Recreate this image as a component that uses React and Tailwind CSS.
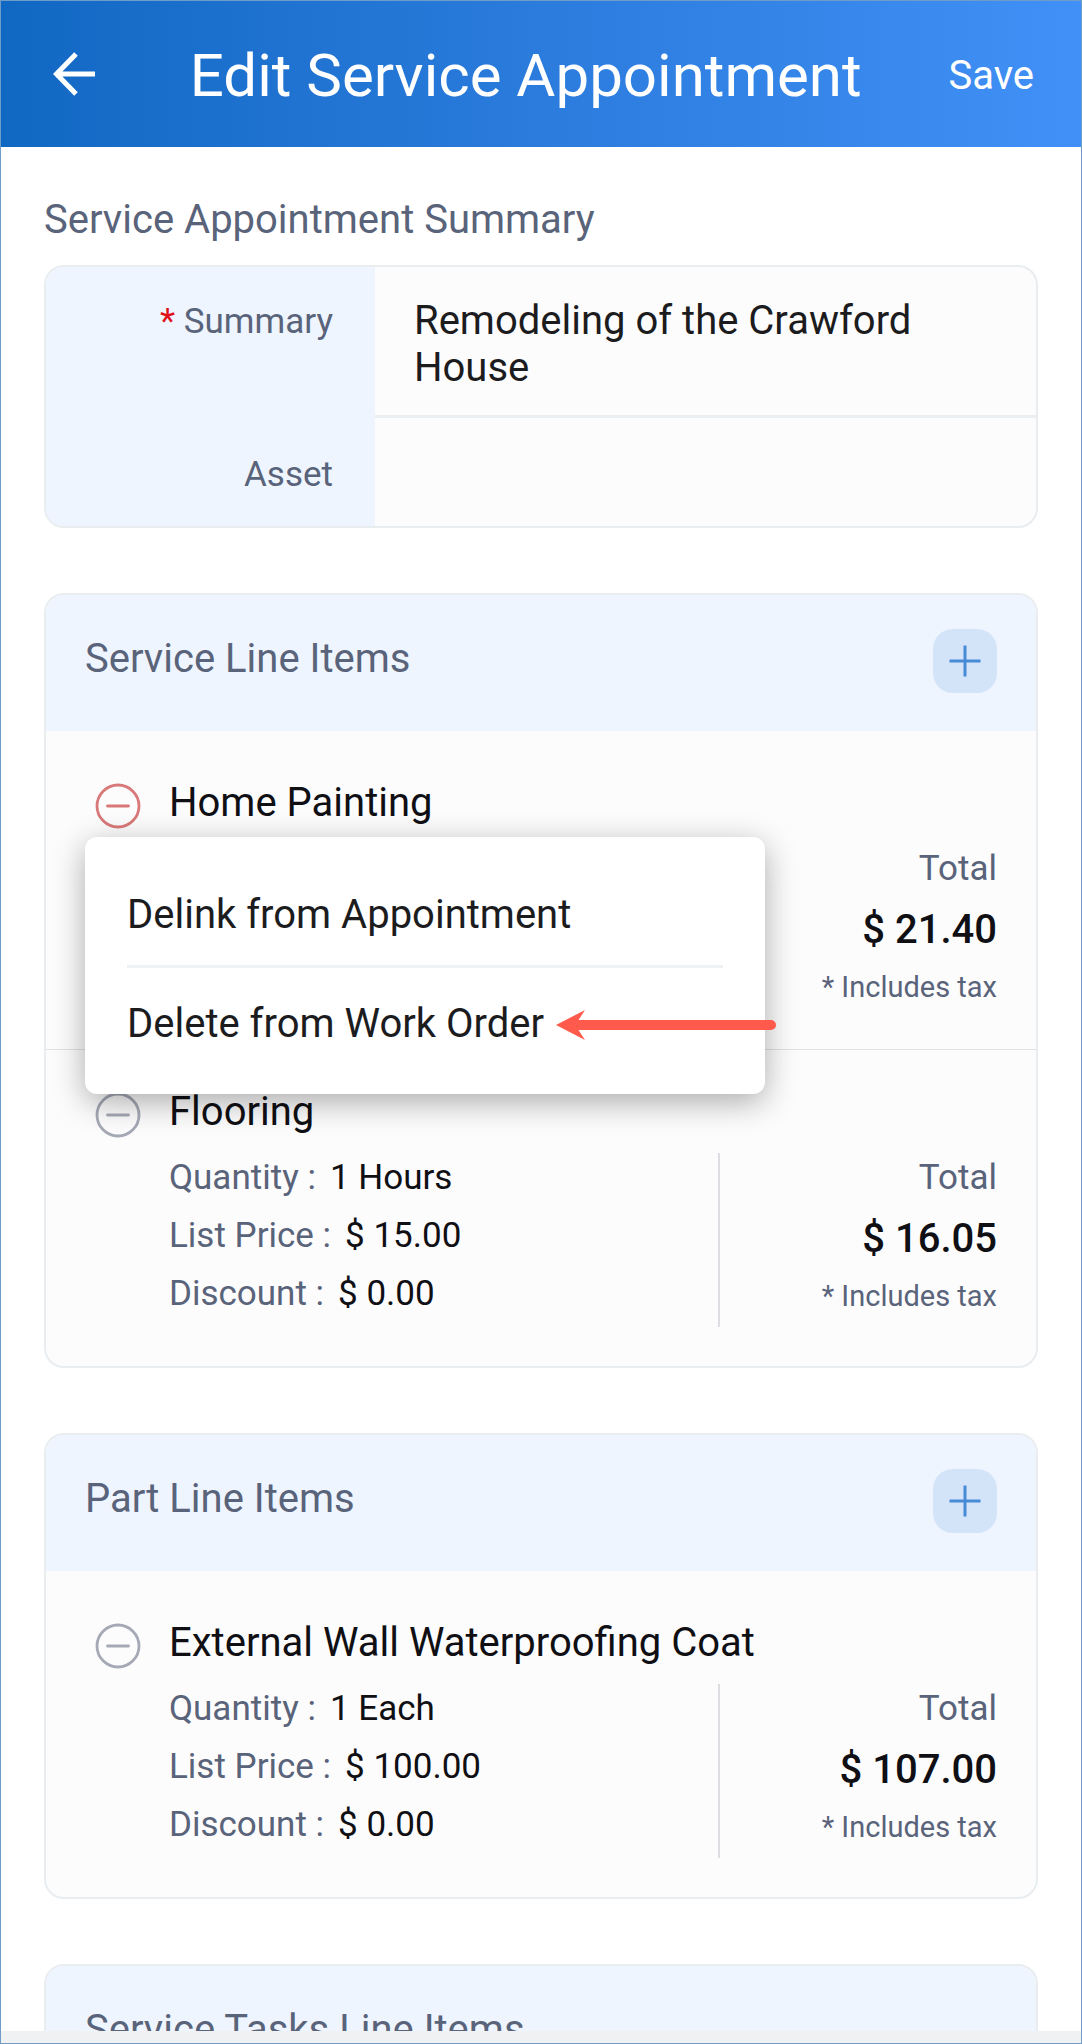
import { useState } from 'react';

const SERVICE_ITEMS = [
  { name: 'Home Painting', details: [], total: '$ 21.40' },
  {
    name: 'Flooring',
    details: [
      { label: 'Quantity', value: '1 Hours' },
      { label: 'List Price', value: '$ 15.00' },
      { label: 'Discount', value: '$ 0.00' },
    ],
    total: '$ 16.05',
  },
];

const PART_ITEMS = [
  {
    name: 'External Wall Waterproofing Coat',
    details: [
      { label: 'Quantity', value: '1 Each' },
      { label: 'List Price', value: '$ 100.00' },
      { label: 'Discount', value: '$ 0.00' },
    ],
    total: '$ 107.00',
  },
];

function BackIcon() {
  return (
    <svg className="w-[42px] h-[44px]" viewBox="0 0 42 44" fill="none" stroke="currentColor" strokeWidth="5">
      <path d="M42 22H4M23 2L3.500 22L23 42" />
    </svg>
  );
}

function PlusIcon() {
  return (
    <svg className="w-8 h-8" viewBox="0 0 32 32" fill="none" stroke="currentColor" strokeWidth="3">
      <path d="M16 0.500V31.500M0.500 16H31.500" />
    </svg>
  );
}

function MinusIcon() {
  return (
    <svg className="w-[46px] h-[46px]" viewBox="0 0 46 46" fill="none" stroke="currentColor" strokeWidth="2.800">
      <circle cx="23" cy="23" r="21" />
      <path d="M12.500 23H33.500" strokeLinecap="round" />
    </svg>
  );
}

function Pointer() {
  return (
    <svg className="absolute left-[471px] bottom-[54px] w-[220px] h-[30px]" viewBox="0 0 220 30" aria-hidden="true">
      <path d="M0 15L29 0L22.500 10H215A5 5 0 0 1 215 20H22.500L29 30Z" fill="#ff5a4c" />
    </svg>
  );
}

function RemoveMenu() {
  return (
    <div
      role="menu"
      className="absolute z-10 left-[39px] top-[96px] w-[680px] px-[42px] pt-7 pb-[15px] rounded-[12px] bg-white shadow-[0_8px_32px_rgba(0,0,0,0.32)]"
    >
      <button role="menuitem" className="block w-full h-[103px] text-left text-[40px] leading-[48px] text-[#1c1c1e] border-b-3 border-[#eff2f4]">
        Delink from Appointment
      </button>
      <button role="menuitem" className="block w-full h-[111px] text-left text-[40px] leading-[48px] text-[#1c1c1e]">
        Delete from Work Order
      </button>
      <Pointer />
    </div>
  );
}

function LineItem({ item, menuOpen, onToggle }) {
  return (
    <li className="relative flex pt-[38px] pb-[31px] pl-[49px] pr-[39px] border-b border-[#dfe1e5] last:border-b-0">
      <button
        onClick={onToggle}
        aria-label={`Remove ${item.name}`}
        className={`self-start mt-1 mr-[28px] ${menuOpen ? 'text-[#d87878]' : 'text-[#a5a9b5]'}`}
      >
        <MinusIcon />
      </button>
      <div className="flex-1 min-w-0">
        <h3 className="text-[40px] leading-[48px] text-[#0f0f14] mb-[17px]">{item.name}</h3>
        <div className="flex min-h-[174px]">
          <dl className="flex-1 flex flex-col gap-2 text-[35px] leading-[50px]">
            {item.details.map((d) => (
              <div key={d.label} className="flex gap-[14px]">
                <dt className="text-[#59637a]">{d.label} :</dt>
                <dd className="text-[#0f0f14]">{d.value}</dd>
              </div>
            ))}
          </dl>
          <div className="w-[279px] border-l-2 border-[#dcdee2] text-right text-[#59637a]">
            <p className="text-[35px] leading-[50px]">Total</p>
            <p className="mt-3 text-[40px] leading-[48px] font-medium text-[#0f0f14]">{item.total}</p>
            <p className="mt-4 text-[29px] leading-[34px]">* Includes tax</p>
          </div>
        </div>
      </div>
      {menuOpen && <RemoveMenu />}
    </li>
  );
}

function LineItemCard({ title, items = [], canAdd = true, openItem, onToggle }) {
  return (
    <section className="mt-[65px] border-2 border-[#e9edf0] rounded-[20px] bg-[#fcfcfd]">
      <div className="flex justify-between items-center h-[136px] pl-[39px] pr-[39px] pb-1 rounded-t-[18px] bg-[#eef5ff]">
        <h2 className="text-[40px] leading-[48px] text-[#59637a] mb-1">{title}</h2>
        {canAdd && (
          <button
            aria-label={`Add to ${title}`}
            className="w-16 h-16 flex items-center justify-center rounded-[20px] bg-[#d3e4f9] text-[#478ad5]"
          >
            <PlusIcon />
          </button>
        )}
      </div>
      <ul className="pt-[10px] pb-2">
        {items.map((item) => (
          <LineItem
            key={item.name}
            item={item}
            menuOpen={openItem === item.name}
            onToggle={() => onToggle(item.name)}
          />
        ))}
      </ul>
    </section>
  );
}

export default function App() {
  const [openItem, setOpenItem] = useState('Home Painting');
  const toggle = (name) => setOpenItem(openItem === name ? null : name);

  return (
    <div className="h-screen flex flex-col overflow-hidden border border-[#6f9cc8] bg-white font-[Roboto,sans-serif]">
      <header className="shrink-0 flex items-center justify-between h-[146px] pl-[52px] pr-[47px] bg-linear-to-r from-[#1068c3] to-[#4090f7] text-white">
        <button aria-label="Back">
          <BackIcon />
        </button>
        <h1 className="ml-2 pt-1 text-[60px] leading-[72px]">Edit Service Appointment</h1>
        <button className="pt-1 text-[40px] leading-[48px]">Save</button>
      </header>

      <main className="flex-1 min-h-0 overflow-hidden px-[43px]">
        <h2 className="mt-[49px] mb-[21px] text-[40px] leading-[48px] text-[#59637a]">Service Appointment Summary</h2>
        <form className="border-2 border-[#e9edf0] rounded-[20px] overflow-hidden bg-[#fcfcfd]">
          <div className="flex">
            <label htmlFor="summary" className="w-[329px] shrink-0 pt-[31px] pr-[42px] text-right text-[35px] leading-[48px] text-[#59637a] bg-[#eef5ff]">
              <span className="text-[#e01219]">*</span> Summary
            </label>
            <textarea
              id="summary"
              rows={2}
              required
              defaultValue="Remodeling of the Crawford House"
              className="flex-1 min-w-0 pt-[30px] pb-[24px] px-[39px] text-[40px] leading-[47px] text-[#1c1c1e] border-b-3 border-[#ebeff2] resize-none outline-none"
            />
          </div>
          <div className="flex">
            <label htmlFor="asset" className="w-[329px] shrink-0 pt-[33px] pb-[27px] pr-[42px] text-right text-[35px] leading-[48px] text-[#59637a] bg-[#eef5ff]">
              Asset
            </label>
            <input id="asset" type="text" className="flex-1 min-w-0 px-[39px] text-[40px] text-[#1c1c1e] outline-none" />
          </div>
        </form>

        <LineItemCard title="Service Line Items" items={SERVICE_ITEMS} openItem={openItem} onToggle={toggle} />
        <LineItemCard title="Part Line Items" items={PART_ITEMS} openItem={openItem} onToggle={toggle} />
        <LineItemCard title="Service Tasks Line Items" canAdd={false} />
      </main>

      <div className="shrink-0 h-3 bg-[#f0f1f3]" />
    </div>
  );
}
